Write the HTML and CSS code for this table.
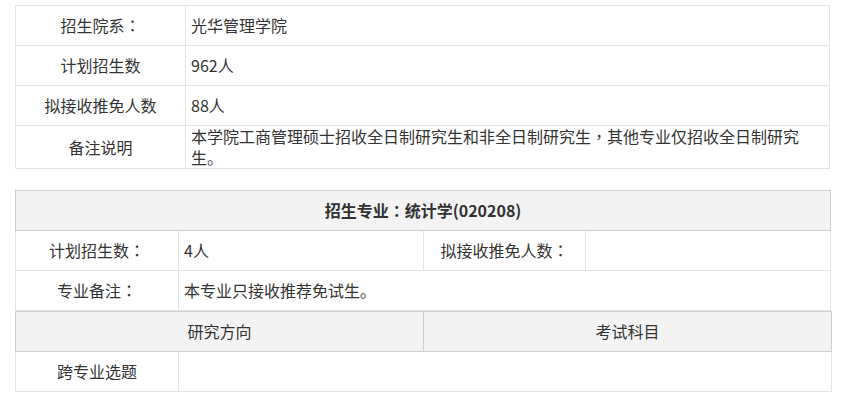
FILE: index.html
```html
<!DOCTYPE html>
<html lang="zh-CN">
<head>
<meta charset="utf-8">
<title>招生信息</title>
<link rel="stylesheet" href="styles.css">
</head>
<body>
<div class="page">
  <table class="info">
    <colgroup><col class="c-label"><col></colgroup>
    <tr><td class="label">招生院系<span class="p" lang="zh-TW">：</span></td><td class="value">光华管理学院</td></tr>
    <tr><td class="label">计划招生数</td><td class="value">962人</td></tr>
    <tr><td class="label">拟接收推免人数</td><td class="value">88人</td></tr>
    <tr><td class="label">备注说明</td><td class="value wrap">本学院工商管理硕士招收全日制研究生和非全日制研究生<span class="p" lang="zh-TW">，</span>其他专业仅招收全日制研究生。</td></tr>
  </table>

  <div class="major">
    <table class="spec">
      <colgroup><col class="s1"><col class="s2"><col class="s3"><col class="s4"></colgroup>
      <tr><th class="title" colspan="4">招生专业<span class="p" lang="zh-TW">：</span>统计学(020208)</th></tr>
      <tr>
        <td class="label">计划招生数<span class="p" lang="zh-TW">：</span></td><td class="value">4人</td>
        <td class="label">拟接收推免人数<span class="p" lang="zh-TW">：</span></td><td class="value"></td>
      </tr>
      <tr><td class="label">专业备注<span class="p" lang="zh-TW">：</span></td><td class="value" colspan="3">本专业只接收推荐免试生。</td></tr>
    </table>
    <table class="dirs">
      <colgroup><col class="d1"><col class="d2"><col class="d3"></colgroup>
      <tr><th class="sub" colspan="2">研究方向</th><th class="sub">考试科目</th></tr>
      <tr><td class="label">跨专业选题</td><td class="value" colspan="2"></td></tr>
    </table>
  </div>
</div>
</body>
</html>
```

FILE: styles.css
```css
* { box-sizing: border-box; }
html, body { margin: 0; padding: 0; background: #fff; }
body {
  font-family: "Noto Sans CJK SC", "Microsoft YaHei", sans-serif;
  font-size: 16px;
  color: #333;
}
.page { padding: 5px 0 0 15px; }
.p { font-family: "Noto Sans CJK TC", "Noto Sans CJK SC", sans-serif; }

table {
  border-collapse: collapse;
  table-layout: fixed;
}
td, th {
  padding: 0;
  height: 40px;
  line-height: 21px;
  vertical-align: middle;
  font-weight: normal;
}

.info { width: 815px; }
.info td { border: 1px solid #e4e4e4; }
.info .c-label { width: 170px; }
.label { text-align: center; }
.value { text-align: left; padding: 0 20px 0 5px; }
.info .wrap { height: 43px; }

.major { margin-top: 21px; }
.spec { width: 815px; }
.spec td { border: 1px solid #e4e4e4; }
.spec .s1 { width: 163px; }
.spec .s2 { width: 245px; }
.spec .s3 { width: 162px; }
.spec .s4 { width: 245px; }
.spec .title {
  border: 1px solid #cfcfcf;
  background: #f3f3f3;
  font-weight: bold;
  text-align: center;
}

.dirs { width: 816px; }
.dirs .d1 { width: 163px; }
.dirs .d2 { width: 245px; }
.dirs .d3 { width: 408px; }
.dirs td { border: 1px solid #e4e4e4; }
.dirs .sub {
  border: 1px solid #cfcfcf;
  background: #f3f3f3;
  text-align: center;
}
```
